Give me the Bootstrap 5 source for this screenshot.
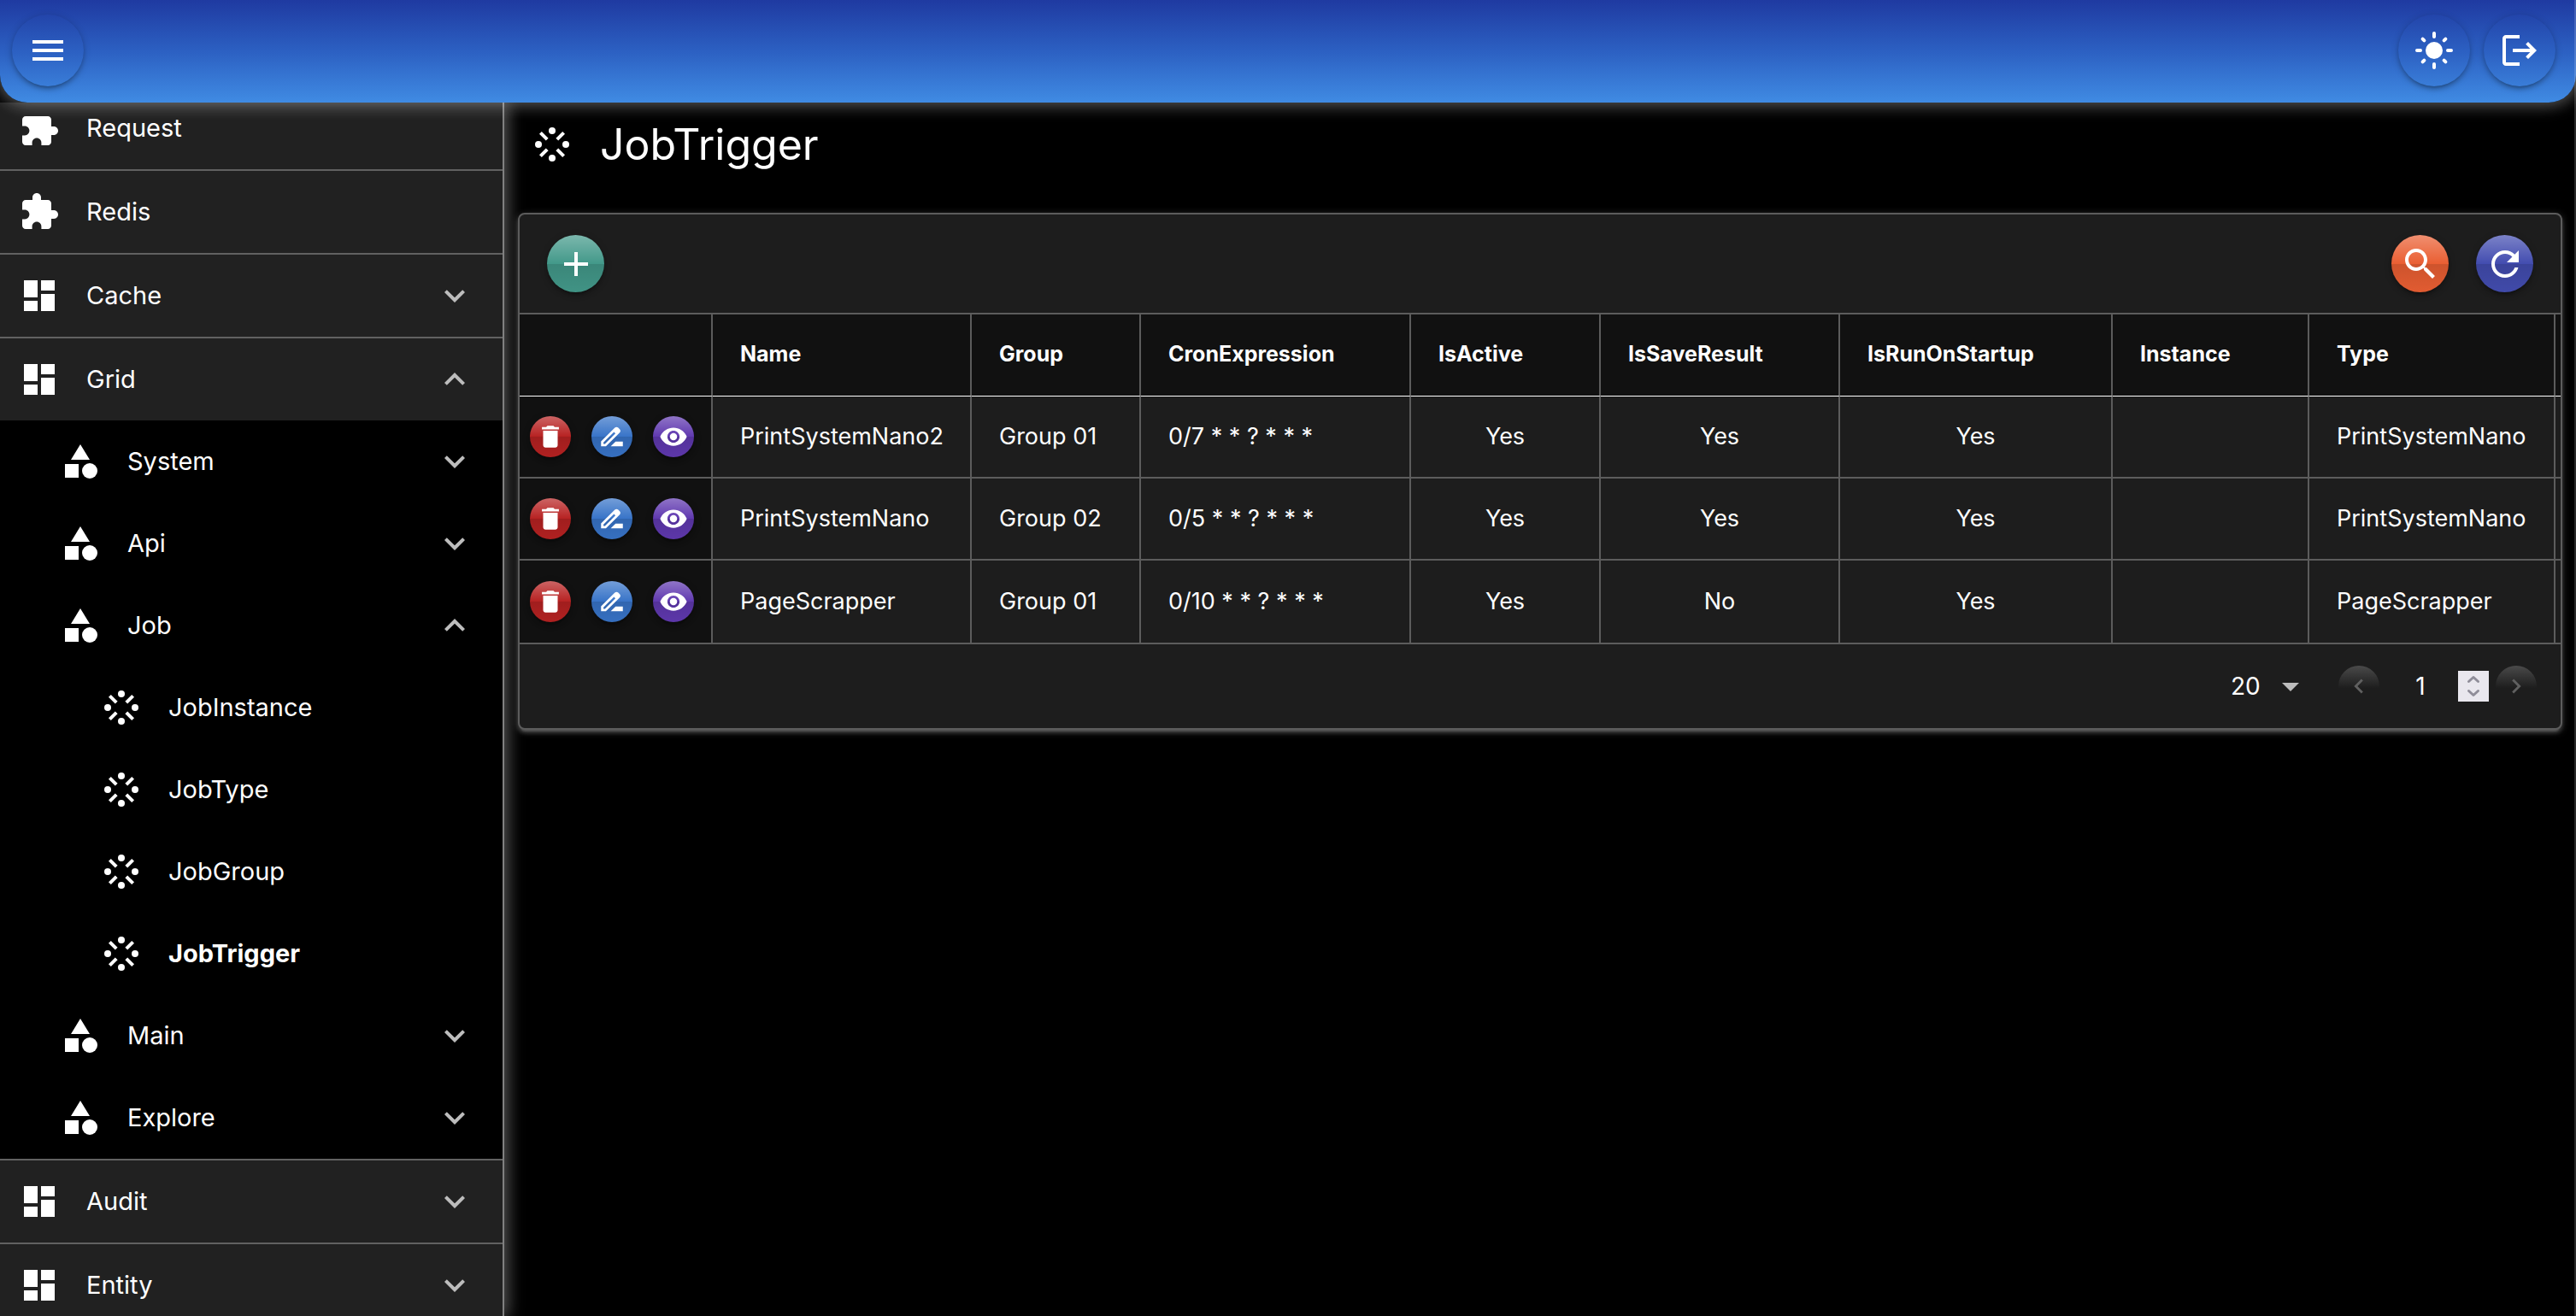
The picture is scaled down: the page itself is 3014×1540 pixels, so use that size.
<!DOCTYPE html>
<html lang="en">
<head>
<meta charset="utf-8">
<meta name="viewport" content="width=device-width, initial-scale=1">
<title>JobTrigger</title>
<link href="https://cdn.jsdelivr.net/npm/bootstrap@5.3.0/dist/css/bootstrap.min.css" rel="stylesheet">
<style>
  body { font-family: Inter, "Open Sans", sans-serif; font-size: 29px; line-height: 28px; background: #000; color: #fff; }
  svg { display: block; fill: currentColor; flex: none; }
  .ico { width: 48px; height: 48px; }
  .ico-sm { width: 34px; height: 34px; }

  /* top bar */
  .topbar { height: 120px; padding: 0 24px 2px 14px; z-index: 3; border-radius: 0 0 32px 32px;
    background: linear-gradient(#1f3aa1, #2c60c2 50%, #408be3);
    box-shadow: 0 0 20px 4px rgba(255,255,255,.2), 0 0 20px rgba(255,255,255,.24); }
  .round-btn { display: flex; align-items: center; justify-content: center; padding: 0; border: 0; border-radius: 50%; color: #fff;
    background-color: transparent;
    box-shadow: 0 2px 10px rgba(0,0,0,.2), 0 4px 4px rgba(0,0,0,.14), 0 6px 2px -4px rgba(0,0,0,.12); }
  .size-lg { width: 84px; height: 84px; }
  .size-md { width: 67px; height: 67px; }
  .size-sm { width: 48px; height: 48px; }
  .gloss { background-image: linear-gradient(rgba(255,255,255,.3), rgba(255,255,255,0) 50%, rgba(0,0,0,.12) 51%, rgba(0,0,0,.04)); }
  .c-teal { background-color: #43998a; }
  .c-orange { background-color: #ea5f33; }
  .c-indigo { background-color: #434db0; }
  .c-red { background-color: #b72222; }
  .c-blue { background-color: #3874c8; }
  .c-purple { background-color: #6039b0; }

  /* side menu */
  .side { width: 590px; padding-top: 16px; background: #212121; border-right: 2px solid #808080; z-index: 2;
    box-shadow: 0 0 20px 4px rgba(255,255,255,.2), 0 0 20px rgba(255,255,255,.24); }
  .side-scroll { margin-top: -34px; }
  .side-clip { overflow: hidden; }
  .side-link { display: flex; align-items: center; height: 96px; padding: 0 32px 0 22px; gap: 31px; color: #fff; text-decoration: none; }
  .side-link .chev { margin-left: auto; color: #bdbdbd; }
  .ruled { height: 98px; border-top: 2px solid #616161; }
  .sub { background: #000; }
  .sub .side-link { padding-left: 70px; }
  .sub .sub .side-link { padding-left: 118px; }

  /* page */
  .page { padding: 13px 16px 0; min-width: 0; }
  .page-title { font-size: 50px; line-height: 72px; }
  .heading { padding: 0 16px; gap: 32px; margin-bottom: 44px; }
  .panel { background: #1d1d1d; border: 2px solid #5c5c5c; border-radius: 8px;
    box-shadow: 0 2px 10px rgba(255,255,255,.2), 0 4px 4px rgba(255,255,255,.14), 0 6px 2px -4px rgba(255,255,255,.12); }
  .tools { height: 115px; padding: 0 32px; gap: 32px; border-bottom: 2px solid #5c5c5c; box-sizing: content-box; }
  .grid-table { --bs-table-bg: transparent; --bs-table-color: #fff; table-layout: fixed; border-collapse: separate; border-spacing: 0; font-size: 27px; line-height: 40px; white-space: nowrap; }
  .grid-table > :not(caption) > * > * { height: 96px; padding: 0 32px; vertical-align: middle; border: 0 solid #5c5c5c; border-width: 0 2px 2px 0; }
  .grid-table > thead > tr > th { padding-bottom: 4px; font-size: 25px; font-weight: 700; background: #111; border-bottom: 1px solid #fff; }
  .grid-table > tbody > tr:last-child > td { border-bottom-width: 0; }
  .grid-table > :not(caption) > tr > *:first-child { padding: 0 0 0 12px; background: #111; }
  .grid-table > :not(caption) > tr > *:last-child { padding: 0; border-right: 0; }
  .w-act { width: 226px; } .w-name { width: 303px; } .w-group { width: 198px; } .w-cron { width: 316px; }
  .w-active { width: 222px; } .w-save { width: 280px; } .w-run { width: 319px; } .w-inst { width: 230px; } .w-type { width: 288px; }
  .pager { height: 100px; padding: 0 28px; border-top: 2px solid #5c5c5c; font-size: 28px; }
  .rows-select { width: 48px; height: 48px; padding: 0 0 0 2px; border: 0; background: transparent; color: #fff; appearance: none; }
  .caret { color: #bdbdbd; margin-right: 32px; }
  .page-num { width: 92px; height: 48px; padding: 0 0 0 4px; border: 0; background: transparent; color: #fff; text-align: center; appearance: textfield; }
  .page-num::-webkit-inner-spin-button, .page-num::-webkit-outer-spin-button { appearance: none; margin: 0; }
  .spinner { width: 36px; height: 36px; padding: 0; border: 0; background: #e9e7ee; margin-right: 8px; }
  .nav-dim { box-shadow: none; color: #606060; background-image: linear-gradient(#4a4a4a, #1d1d1d 55%); }
  .edge { position: fixed; top: 0; right: 0; bottom: 0; width: 2px; background: rgba(255,255,255,.16); z-index: 4; }
</style>
<script src="https://cdn.jsdelivr.net/npm/bootstrap@5.3.0/dist/js/bootstrap.bundle.min.js"></script>
</head>
<body class="vh-100 d-flex flex-column overflow-hidden">
<svg width="0" height="0" class="position-absolute" aria-hidden="true">
  <symbol id="menu" viewBox="0 0 24 24"><path d="M3 18h18v-2H3v2zm0-5h18v-2H3v2zm0-7v2h18V6H3z"/></symbol>
  <symbol id="sun" viewBox="0 0 24 24"><circle cx="12" cy="12" r="5"/><path fill="none" stroke="currentColor" stroke-width="2" stroke-linecap="round" d="M12 2v2M12 20v2M2 12h2M20 12h2M5.3 5.3l.9.9M17.8 17.8l.9.9M5.3 18.7l.9-.9M17.800 6.200l.9-.9"/></symbol>
  <symbol id="logout" viewBox="0 0 24 24"><path d="M17 7l-1.41 1.41L18.17 11H8v2h10.17l-2.58 2.58L17 17l5-5zM4 5h8V3H4c-1.1 0-2 .9-2 2v14c0 1.1.9 2 2 2h8v-2H4V5z"/></symbol>
  <symbol id="puzzle" viewBox="0 0 24 24"><path d="M20.5 11H19V7c0-1.1-.9-2-2-2h-4V3.5C13 2.12 11.88 1 10.5 1S8 2.12 8 3.5V5H4c-1.1 0-1.99.9-1.99 2v3.8H3.5c1.49 0 2.7 1.21 2.7 2.7s-1.21 2.7-2.7 2.7H2V20c0 1.1.9 2 2 2h3.8v-1.5c0-1.49 1.21-2.7 2.7-2.7 1.49 0 2.7 1.21 2.7 2.7V22H17c1.1 0 2-.9 2-2v-4h1.5c1.38 0 2.5-1.12 2.5-2.5S21.88 11 20.5 11z"/></symbol>
  <symbol id="dash" viewBox="0 0 24 24"><path d="M3 13h8V3H3v10zm0 8h8v-6H3v6zm10 0h8V11h-8v10zm0-18v6h8V3h-8z"/></symbol>
  <symbol id="shapes" viewBox="0 0 24 24"><path d="M12 2l-5.5 9h11zM3 13.5h8v8H3z"/><circle cx="17.5" cy="17.5" r="4.5"/></symbol>
  <symbol id="burst" viewBox="0 0 24 24"><circle cx="12" cy="4" r="2"/><circle cx="20" cy="12" r="2"/><circle cx="12" cy="20" r="2"/><circle cx="4" cy="12" r="2"/><path fill="none" stroke="currentColor" stroke-width="2" d="M5.200 5.200l3.900 3.900M18.800 5.200l-3.900 3.900M5.200 18.800l3.900-3.900M18.800 18.800l-3.900-3.900"/></symbol>
  <symbol id="down" viewBox="0 0 24 24"><path d="M16.59 8.59L12 13.17 7.41 8.59 6 10l6 6 6-6z"/></symbol>
  <symbol id="up" viewBox="0 0 24 24"><path d="M12 8l-6 6 1.41 1.41L12 10.83l4.59 4.58L18 14z"/></symbol>
  <symbol id="plus" viewBox="0 0 24 24"><path d="M19 13h-6v6h-2v-6H5v-2h6V5h2v6h6v2z"/></symbol>
  <symbol id="find" viewBox="0 0 24 24"><path d="M15.5 14h-.79l-.28-.27C15.41 12.59 16 11.11 16 9.5 16 5.91 13.09 3 9.5 3S3 5.91 3 9.5 5.91 16 9.5 16c1.61 0 3.09-.59 4.23-1.57l.27.28v.79l5 4.99L20.49 19l-4.99-5zm-6 0C7.01 14 5 11.99 5 9.5S7.01 5 9.5 5 14 7.01 14 9.5 11.99 14 9.5 14z"/></symbol>
  <symbol id="reload" viewBox="0 0 24 24"><path d="M17.65 6.35C16.2 4.9 14.21 4 12 4c-4.42 0-7.99 3.58-7.99 8s3.57 8 7.99 8c3.73 0 6.84-2.55 7.73-6h-2.08c-.82 2.33-3.04 4-5.65 4-3.31 0-6-2.69-6-6s2.69-6 6-6c1.66 0 3.14.69 4.22 1.78L13 11h7V4l-2.35 2.35z"/></symbol>
  <symbol id="trash" viewBox="0 0 24 24"><path d="M6 19c0 1.100.9 2 2 2h8c1.100 0 2-.9 2-2V7H6v12zM19 4h-3.500l-1-1h-5l-1 1H5v2h14V4z"/></symbol>
  <symbol id="edit" viewBox="0 0 24 24"><path d="M18.41 5.8L17.2 4.59c-.78-.78-2.05-.78-2.83 0l-2.68 2.68L3 15.96V20h4.04l8.74-8.74 2.63-2.63c.79-.78.79-2.05 0-2.83zM6.21 18H5v-1.21l8.66-8.66 1.21 1.21L6.21 18zM11 20l4-4h6v4H11z"/></symbol>
  <symbol id="eye" viewBox="0 0 24 24"><path d="M12 4.5C7 4.5 2.73 7.61 1 12c1.73 4.39 6 7.5 11 7.5s9.27-3.11 11-7.5c-1.73-4.39-6-7.5-11-7.5zM12 17c-2.76 0-5-2.24-5-5s2.24-5 5-5 5 2.24 5 5-2.24 5-5 5zm0-8c-1.66 0-3 1.34-3 3s1.34 3 3 3 3-1.34 3-3-1.34-3-3-3z"/></symbol>
  <symbol id="drop" viewBox="0 0 24 24"><path d="M7 10l5 5 5-5z"/></symbol>
  <symbol id="left" viewBox="0 0 24 24"><path d="M15.41 7.41L14 6l-6 6 6 6 1.41-1.41L10.83 12z"/></symbol>
  <symbol id="right" viewBox="0 0 24 24"><path d="M10 6L8.59 7.41 13.17 12l-4.58 4.59L10 18l6-6z"/></symbol>
  <symbol id="updown" viewBox="0 0 36 36"><path fill="none" stroke="#8f8d99" stroke-width="3" stroke-linecap="round" stroke-linejoin="round" d="M12.500 12.500l5.500-5 5.500 5M12.500 23.500l5.500 5 5.500-5"/></symbol>
</svg>

<header class="topbar d-flex align-items-center position-relative flex-shrink-0">
  <button type="button" class="round-btn size-lg" aria-label="Menu"><svg class="ico"><use href="#menu"/></svg></button>
  <div class="d-flex gap-3 ms-auto">
    <button type="button" class="round-btn size-lg" aria-label="Light mode"><svg class="ico"><use href="#sun"/></svg></button>
    <button type="button" class="round-btn size-lg" aria-label="Log out"><svg class="ico"><use href="#logout"/></svg></button>
  </div>
</header>

<div class="d-flex flex-grow-1 overflow-hidden">
  <aside class="side d-flex flex-column flex-shrink-0 position-relative">
    <div class="side-clip flex-grow-1">
    <nav class="side-scroll" aria-label="Main">
      <a class="side-link" href="#"><svg class="ico"><use href="#puzzle"/></svg>Request</a>
      <a class="side-link ruled" href="#"><svg class="ico"><use href="#puzzle"/></svg>Redis</a>
      <a class="side-link ruled" href="#"><svg class="ico"><use href="#dash"/></svg>Cache<svg class="ico chev"><use href="#down"/></svg></a>
      <a class="side-link ruled" href="#"><svg class="ico"><use href="#dash"/></svg>Grid<svg class="ico chev"><use href="#up"/></svg></a>
      <div class="sub">
        <a class="side-link" href="#"><svg class="ico"><use href="#shapes"/></svg>System<svg class="ico chev"><use href="#down"/></svg></a>
        <a class="side-link" href="#"><svg class="ico"><use href="#shapes"/></svg>Api<svg class="ico chev"><use href="#down"/></svg></a>
        <a class="side-link" href="#"><svg class="ico"><use href="#shapes"/></svg>Job<svg class="ico chev"><use href="#up"/></svg></a>
        <div class="sub">
          <a class="side-link" href="#"><svg class="ico"><use href="#burst"/></svg>JobInstance</a>
          <a class="side-link" href="#"><svg class="ico"><use href="#burst"/></svg>JobType</a>
          <a class="side-link" href="#"><svg class="ico"><use href="#burst"/></svg>JobGroup</a>
          <a class="side-link fw-bold" href="#" aria-current="page"><svg class="ico"><use href="#burst"/></svg>JobTrigger</a>
        </div>
        <a class="side-link" href="#"><svg class="ico"><use href="#shapes"/></svg>Main<svg class="ico chev"><use href="#down"/></svg></a>
        <a class="side-link" href="#"><svg class="ico"><use href="#shapes"/></svg>Explore<svg class="ico chev"><use href="#down"/></svg></a>
      </div>
      <a class="side-link ruled" href="#"><svg class="ico"><use href="#dash"/></svg>Audit<svg class="ico chev"><use href="#down"/></svg></a>
      <a class="side-link ruled" href="#"><svg class="ico"><use href="#dash"/></svg>Entity<svg class="ico chev"><use href="#down"/></svg></a>
    </nav>
    </div>
  </aside>

  <main class="page flex-grow-1">
    <div class="heading d-flex align-items-center">
      <svg class="ico"><use href="#burst"/></svg>
      <h1 class="page-title fw-normal m-0">JobTrigger</h1>
    </div>
    <section class="panel position-relative z-3">
      <div class="tools d-flex align-items-center">
        <button type="button" class="round-btn size-md gloss c-teal" aria-label="Add"><svg class="ico"><use href="#plus"/></svg></button>
        <button type="button" class="round-btn size-md gloss c-orange ms-auto" aria-label="Search"><svg class="ico"><use href="#find"/></svg></button>
        <button type="button" class="round-btn size-md gloss c-indigo" aria-label="Refresh"><svg class="ico"><use href="#reload"/></svg></button>
      </div>
      <table class="table grid-table m-0">
        <colgroup><col class="w-act"><col class="w-name"><col class="w-group"><col class="w-cron"><col class="w-active"><col class="w-save"><col class="w-run"><col class="w-inst"><col class="w-type"><col></colgroup>
        <thead>
          <tr><th></th><th>Name</th><th>Group</th><th>CronExpression</th><th>IsActive</th><th>IsSaveResult</th><th>IsRunOnStartup</th><th>Instance</th><th>Type</th><th></th></tr>
        </thead>
        <tbody>
          <tr>
            <td><div class="d-flex gap-4"><button type="button" class="round-btn size-sm gloss c-red" aria-label="Delete"><svg class="ico-sm"><use href="#trash"/></svg></button><button type="button" class="round-btn size-sm gloss c-blue" aria-label="Edit"><svg class="ico-sm"><use href="#edit"/></svg></button><button type="button" class="round-btn size-sm gloss c-purple" aria-label="View"><svg class="ico-sm"><use href="#eye"/></svg></button></div></td>
            <td>PrintSystemNano2</td><td>Group 01</td><td>0/7 * * ? * * *</td><td class="text-center">Yes</td><td class="text-center">Yes</td><td class="text-center">Yes</td><td></td><td>PrintSystemNano</td><td></td>
          </tr>
          <tr>
            <td><div class="d-flex gap-4"><button type="button" class="round-btn size-sm gloss c-red" aria-label="Delete"><svg class="ico-sm"><use href="#trash"/></svg></button><button type="button" class="round-btn size-sm gloss c-blue" aria-label="Edit"><svg class="ico-sm"><use href="#edit"/></svg></button><button type="button" class="round-btn size-sm gloss c-purple" aria-label="View"><svg class="ico-sm"><use href="#eye"/></svg></button></div></td>
            <td>PrintSystemNano</td><td>Group 02</td><td>0/5 * * ? * * *</td><td class="text-center">Yes</td><td class="text-center">Yes</td><td class="text-center">Yes</td><td></td><td>PrintSystemNano</td><td></td>
          </tr>
          <tr>
            <td><div class="d-flex gap-4"><button type="button" class="round-btn size-sm gloss c-red" aria-label="Delete"><svg class="ico-sm"><use href="#trash"/></svg></button><button type="button" class="round-btn size-sm gloss c-blue" aria-label="Edit"><svg class="ico-sm"><use href="#edit"/></svg></button><button type="button" class="round-btn size-sm gloss c-purple" aria-label="View"><svg class="ico-sm"><use href="#eye"/></svg></button></div></td>
            <td>PageScrapper</td><td>Group 01</td><td>0/10 * * ? * * *</td><td class="text-center">Yes</td><td class="text-center">No</td><td class="text-center">Yes</td><td></td><td>PageScrapper</td><td></td>
          </tr>
        </tbody>
      </table>
      <div class="pager d-flex align-items-center justify-content-end">
        <select class="rows-select" aria-label="Rows per page"><option>20</option></select>
        <svg class="ico caret"><use href="#drop"/></svg>
        <button type="button" class="round-btn size-sm nav-dim" aria-label="Previous page"><svg class="ico-sm"><use href="#left"/></svg></button>
        <input class="page-num" type="number" value="1" aria-label="Page">
        <button type="button" class="spinner" aria-label="Change page"><svg width="36" height="36"><use href="#updown"/></svg></button>
        <button type="button" class="round-btn size-sm nav-dim" aria-label="Next page"><svg class="ico-sm"><use href="#right"/></svg></button>
      </div>
    </section>
  </main>
</div>
<div class="edge"></div>
</body>
</html>
